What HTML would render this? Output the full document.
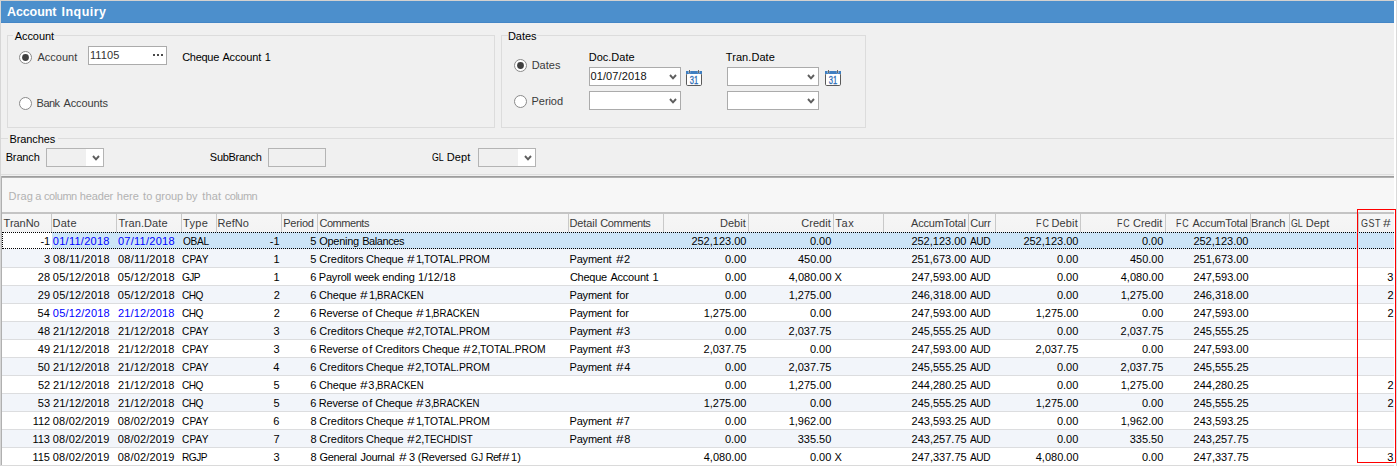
<!DOCTYPE html><html lang="en"><head><meta charset="utf-8"><title>Account Inquiry</title><style>
html,body{margin:0;padding:0}
body{width:1397px;height:466px;overflow:hidden;position:relative;background:#f0f0f0;
 font-family:'Liberation Sans',sans-serif;font-size:11px;color:#000}
div,span.t{position:absolute;box-sizing:border-box}
span.t{white-space:pre;line-height:14px;height:14px}
span.w{position:absolute;top:0;white-space:pre}
.h{color:#3a3a3a}
.b{color:#0000ff}
.g{color:#b2b2b2}
.lbl{color:#000}
.rl{color:#3a3a3a}
svg{position:absolute;overflow:visible}
</style></head><body>
<div style="left:0px;top:0px;width:1397px;height:1px;background:#d3d1cf"></div>
<div style="left:0px;top:1px;width:1px;height:465px;background:#d6d6d6"></div>
<div style="left:1394px;top:1px;width:2px;height:465px;background:#fff"></div>
<div style="left:1396px;top:0px;width:1px;height:466px;background:#dadada"></div>
<div style="left:1px;top:1px;width:1393px;height:22px;background:#4c8fcc;border-bottom:1px solid #4486c6"></div>
<span class="t" style="left:0;top:5px;color:#fff;font-size:12.5px;font-weight:bold;"><span class="w" style="left:6.98px;letter-spacing:-0.101px;">Account </span><span class="w" style="left:61.61px;letter-spacing:0.441px;">Inquiry</span></span>
<div style="left:7px;top:35px;width:488px;height:93px;border:1px solid #dcdcdc;"></div>
<div style="left:501px;top:35px;width:365px;height:93px;border:1px solid #dcdcdc;"></div>
<div style="left:13px;top:30px;width:41px;height:12px;background:#f0f0f0"></div>
<span class="t lbl" style="left:14.64px;top:29px;letter-spacing:-0.032px;">Account</span>
<div style="left:508px;top:30px;width:29px;height:12px;background:#f0f0f0"></div>
<span class="t lbl" style="left:507.98px;top:29px;letter-spacing:-0.042px;">Dates</span>
<svg style="left:19.0px;top:51.0px" width="13" height="13" viewBox="0 0 13 13"><circle cx="6.5" cy="6.5" r="6" fill="#fff" stroke="#8a8a8a" stroke-width="1"/><circle cx="6.5" cy="6.5" r="3.4" fill="#404040"/></svg>
<span class="t rl" style="left:37.40px;top:50px;letter-spacing:0.009px;">Account</span>
<div style="left:88px;top:46px;width:79px;height:19px;background:#fff;border:1px solid #ababab"></div>
<span class="t" style="left:89.95px;top:48px;color:#333;letter-spacing:0.130px;">11105</span>
<div style="left:153px;top:54px;width:2px;height:2px;background:#4a4a4a"></div>
<div style="left:157px;top:54px;width:2px;height:2px;background:#4a4a4a"></div>
<div style="left:161px;top:54px;width:2px;height:2px;background:#4a4a4a"></div>
<span class="t lbl" style="left:0;top:50px;"><span class="w" style="left:182.14px;letter-spacing:-0.274px;">Cheque </span><span class="w" style="left:222.41px;letter-spacing:-0.159px;">Account </span><span class="w" style="left:264.75px;">1</span></span>
<svg style="left:19.0px;top:97.0px" width="13" height="13" viewBox="0 0 13 13"><circle cx="6.5" cy="6.5" r="6" fill="#fff" stroke="#8a8a8a" stroke-width="1"/></svg>
<span class="t rl" style="left:0;top:96px;"><span class="w" style="left:36.61px;letter-spacing:-0.530px;">Bank </span><span class="w" style="left:63.41px;letter-spacing:-0.102px;">Accounts</span></span>
<svg style="left:514.0px;top:59.0px" width="13" height="13" viewBox="0 0 13 13"><circle cx="6.5" cy="6.5" r="6" fill="#fff" stroke="#8a8a8a" stroke-width="1"/><circle cx="6.5" cy="6.5" r="3.4" fill="#404040"/></svg>
<span class="t rl" style="left:531.67px;top:58px;letter-spacing:0.003px;">Dates</span>
<svg style="left:514.0px;top:95.0px" width="13" height="13" viewBox="0 0 13 13"><circle cx="6.5" cy="6.5" r="6" fill="#fff" stroke="#8a8a8a" stroke-width="1"/></svg>
<span class="t rl" style="left:531.61px;top:94px;letter-spacing:-0.076px;">Period</span>
<span class="t lbl" style="left:588.72px;top:50px;letter-spacing:0.009px;">Doc.Date</span>
<span class="t lbl" style="left:725.86px;top:50px;letter-spacing:0.055px;">Tran.Date</span>
<div style="left:589px;top:67px;width:92px;height:19px;background:#fff;border:1px solid #ababab"></div>
<svg style="left:668.6px;top:73.5px" width="8" height="7" viewBox="0 0 8 7"><path d="M1 1 L4 4.4 L7 1" fill="none" stroke="#5e5e5e" stroke-width="1.9" stroke-linejoin="miter"/></svg>
<div style="left:589px;top:91px;width:92px;height:19px;background:#fff;border:1px solid #ababab"></div>
<svg style="left:668.6px;top:97.5px" width="8" height="7" viewBox="0 0 8 7"><path d="M1 1 L4 4.4 L7 1" fill="none" stroke="#5e5e5e" stroke-width="1.9" stroke-linejoin="miter"/></svg>
<div style="left:727px;top:67px;width:92px;height:19px;background:#fff;border:1px solid #ababab"></div>
<svg style="left:806.6px;top:73.5px" width="8" height="7" viewBox="0 0 8 7"><path d="M1 1 L4 4.4 L7 1" fill="none" stroke="#5e5e5e" stroke-width="1.9" stroke-linejoin="miter"/></svg>
<div style="left:727px;top:91px;width:92px;height:19px;background:#fff;border:1px solid #ababab"></div>
<svg style="left:806.6px;top:97.5px" width="8" height="7" viewBox="0 0 8 7"><path d="M1 1 L4 4.4 L7 1" fill="none" stroke="#5e5e5e" stroke-width="1.9" stroke-linejoin="miter"/></svg>
<span class="t" style="left:590.42px;top:69px;color:#111;letter-spacing:0.137px;">01/07/2018</span>
<svg style="left:686px;top:70px" width="16" height="16" viewBox="0 0 16 16">
<rect x="0.5" y="3.5" width="15" height="12" rx="1.2" fill="#fff" stroke="#5a5a5a"/>
<rect x="0" y="1" width="16" height="3" fill="#3f7fc1"/>
<rect x="2.6" y="0" width="1.6" height="3.2" fill="#f0f0f0"/><rect x="11.8" y="0" width="1.6" height="3.2" fill="#f0f0f0"/>
<rect x="3.1" y="0" width="0.9" height="3" fill="#5a5a5a"/><rect x="12.1" y="0" width="0.9" height="3" fill="#5a5a5a"/>
<text x="3.7" y="13.6" textLength="8.4" lengthAdjust="spacingAndGlyphs" font-family="'Liberation Sans',sans-serif" font-size="10" fill="#2a6cb6" stroke="#2a6cb6" stroke-width="0.3">31</text></svg>
<svg style="left:825px;top:70px" width="16" height="16" viewBox="0 0 16 16">
<rect x="0.5" y="3.5" width="15" height="12" rx="1.2" fill="#fff" stroke="#5a5a5a"/>
<rect x="0" y="1" width="16" height="3" fill="#3f7fc1"/>
<rect x="2.6" y="0" width="1.6" height="3.2" fill="#f0f0f0"/><rect x="11.8" y="0" width="1.6" height="3.2" fill="#f0f0f0"/>
<rect x="3.1" y="0" width="0.9" height="3" fill="#5a5a5a"/><rect x="12.1" y="0" width="0.9" height="3" fill="#5a5a5a"/>
<text x="3.7" y="13.6" textLength="8.4" lengthAdjust="spacingAndGlyphs" font-family="'Liberation Sans',sans-serif" font-size="10" fill="#2a6cb6" stroke="#2a6cb6" stroke-width="0.3">31</text></svg>
<div style="left:1px;top:138px;width:1393px;height:1px;background:#dcdcdc"></div>
<div style="left:8px;top:132px;width:50px;height:12px;background:#f0f0f0"></div>
<span class="t lbl" style="left:9.61px;top:132px;letter-spacing:-0.134px;">Branches</span>
<span class="t lbl" style="left:5.65px;top:150px;letter-spacing:-0.129px;">Branch</span>
<div style="left:46px;top:148px;width:58px;height:19px;background:#f0f0f0;border:1px solid #b4b4b4"></div>
<div style="left:86px;top:149px;width:17px;height:17px;background:#fff"></div>
<svg style="left:91.6px;top:154.5px" width="8" height="7" viewBox="0 0 8 7"><path d="M1 1 L4 4.4 L7 1" fill="none" stroke="#5e5e5e" stroke-width="1.9" stroke-linejoin="miter"/></svg>
<span class="t lbl" style="left:209.86px;top:150px;letter-spacing:-0.304px;">SubBranch</span>
<div style="left:268px;top:148px;width:58px;height:19px;background:#f0f0f0;border:1px solid #b4b4b4"></div>
<span class="t lbl" style="left:0;top:150px;"><span class="w" style="left:431.79px;letter-spacing:-0.176px;transform:scaleX(0.8);transform-origin:0 50%;">GL </span><span class="w" style="left:446.78px;letter-spacing:0.131px;">Dept</span></span>
<div style="left:478px;top:148px;width:58px;height:19px;background:#f0f0f0;border:1px solid #b4b4b4"></div>
<div style="left:518px;top:149px;width:17px;height:17px;background:#fff"></div>
<svg style="left:523.6px;top:154.5px" width="8" height="7" viewBox="0 0 8 7"><path d="M1 1 L4 4.4 L7 1" fill="none" stroke="#5e5e5e" stroke-width="1.9" stroke-linejoin="miter"/></svg>
<div style="left:1px;top:174px;width:1393px;height:1px;background:#dedede"></div>
<div style="left:1px;top:176px;width:1393px;height:1px;background:#9d9d9d"></div>
<div style="left:1px;top:177px;width:1393px;height:1px;background:#b0b0b0"></div>
<div style="left:1px;top:176px;width:1px;height:290px;background:#b0b0b0"></div>
<div style="left:2px;top:178px;width:1392px;height:34px;background:#f7f7f7"></div>
<span class="t g" style="left:0;top:189px;"><span class="w" style="left:8.56px;letter-spacing:0.188px;">Drag </span><span class="w" style="left:35.33px;letter-spacing:-0.150px;">a </span><span class="w" style="left:44.10px;letter-spacing:-0.474px;">column </span><span class="w" style="left:79.86px;letter-spacing:-0.176px;">header </span><span class="w" style="left:116.71px;letter-spacing:0.085px;">here </span><span class="w" style="left:142.91px;letter-spacing:0.269px;">to </span><span class="w" style="left:155.35px;letter-spacing:-0.113px;">group </span><span class="w" style="left:186.06px;letter-spacing:-0.145px;">by </span><span class="w" style="left:202.21px;letter-spacing:0.164px;">that </span><span class="w" style="left:224.84px;letter-spacing:-0.519px;">column</span></span>
<div style="left:2px;top:212px;width:1392px;height:2px;background:#c4c4c4"></div>
<div style="left:2px;top:214px;width:1392px;height:18px;background:linear-gradient(#f6f6f6,#f3f3f3)"></div>
<div style="left:51px;top:214px;width:1px;height:18px;background:#c9c9c9"></div>
<div style="left:116px;top:214px;width:1px;height:18px;background:#c9c9c9"></div>
<div style="left:181px;top:214px;width:1px;height:18px;background:#c9c9c9"></div>
<div style="left:216px;top:214px;width:1px;height:18px;background:#c9c9c9"></div>
<div style="left:281px;top:214px;width:1px;height:18px;background:#c9c9c9"></div>
<div style="left:317px;top:214px;width:1px;height:18px;background:#c9c9c9"></div>
<div style="left:568px;top:214px;width:1px;height:18px;background:#c9c9c9"></div>
<div style="left:663px;top:214px;width:1px;height:18px;background:#c9c9c9"></div>
<div style="left:748px;top:214px;width:1px;height:18px;background:#c9c9c9"></div>
<div style="left:833px;top:214px;width:1px;height:18px;background:#c9c9c9"></div>
<div style="left:883px;top:214px;width:1px;height:18px;background:#c9c9c9"></div>
<div style="left:968px;top:214px;width:1px;height:18px;background:#c9c9c9"></div>
<div style="left:995px;top:214px;width:1px;height:18px;background:#c9c9c9"></div>
<div style="left:1080px;top:214px;width:1px;height:18px;background:#c9c9c9"></div>
<div style="left:1165px;top:214px;width:1px;height:18px;background:#c9c9c9"></div>
<div style="left:1250px;top:214px;width:1px;height:18px;background:#c9c9c9"></div>
<div style="left:1289px;top:214px;width:1px;height:18px;background:#c9c9c9"></div>
<div style="left:1358px;top:214px;width:1px;height:18px;background:#c9c9c9"></div>
<span class="t h" style="left:3.61px;top:216px;letter-spacing:-0.043px;">TranNo</span>
<span class="t h" style="left:52.55px;top:216px;letter-spacing:0.256px;">Date</span>
<span class="t h" style="left:118.41px;top:216px;letter-spacing:0.082px;">Tran.Date</span>
<span class="t h" style="left:183.03px;top:216px;letter-spacing:0.341px;">Type</span>
<span class="t h" style="left:217.61px;top:216px;letter-spacing:-0.009px;">RefNo</span>
<span class="t h" style="left:283.16px;top:216px;letter-spacing:-0.207px;">Period</span>
<span class="t h" style="left:319.41px;top:216px;letter-spacing:-0.451px;">Comments</span>
<span class="t h" style="left:0;top:216px;"><span class="w" style="left:569.53px;letter-spacing:-0.110px;">Detail </span><span class="w" style="left:600.29px;letter-spacing:-0.373px;">Comments</span></span>
<span class="t h" style="left:719.98px;top:216px;letter-spacing:0.034px;">Debit</span>
<span class="t h" style="left:801.37px;top:216px;letter-spacing:0.009px;">Credit</span>
<span class="t h" style="left:835.31px;top:216px;letter-spacing:0.632px;">Tax</span>
<span class="t h" style="left:911.12px;top:216px;letter-spacing:-0.227px;">AccumTotal</span>
<span class="t h" style="left:970.25px;top:216px;letter-spacing:-0.262px;">Curr</span>
<span class="t h" style="left:0;top:216px;"><span class="w" style="left:1035.83px;letter-spacing:1.311px;transform:scaleX(0.808);transform-origin:0 50%;">FC </span><span class="w" style="left:1051.55px;letter-spacing:0.115px;">Debit</span></span>
<span class="t h" style="left:0;top:216px;"><span class="w" style="left:1116.89px;letter-spacing:1.158px;transform:scaleX(0.802);transform-origin:0 50%;">FC </span><span class="w" style="left:1133.12px;letter-spacing:-0.046px;">Credit</span></span>
<span class="t h" style="left:0;top:216px;"><span class="w" style="left:1175.91px;letter-spacing:1.158px;transform:scaleX(0.802);transform-origin:0 50%;">FC </span><span class="w" style="left:1192.60px;letter-spacing:-0.181px;">AccumTotal</span></span>
<span class="t h" style="left:1251.12px;top:216px;letter-spacing:-0.104px;">Branch</span>
<span class="t h" style="left:0;top:216px;"><span class="w" style="left:1290.77px;letter-spacing:-0.176px;transform:scaleX(0.8);transform-origin:0 50%;">GL </span><span class="w" style="left:1305.70px;letter-spacing:0.157px;">Dept</span></span>
<span class="t h" style="left:0;top:216px;"><span class="w" style="left:1360.65px;letter-spacing:0.556px;transform:scaleX(0.817);transform-origin:0 50%;">GST </span><span class="w" style="left:1383.19px;letter-spacing:-0.150px;transform:scaleX(1.25);transform-origin:0 50%;">#</span></span>
<div style="left:2px;top:232px;width:1392px;height:17px;background:#fff"></div>
<div style="left:2px;top:249px;width:1392px;height:1px;background:#f0f3f9"></div>
<div style="left:52px;top:232px;width:1342px;height:17px;background:#cce4f7"></div>
<div style="left:2px;top:232px;width:1392px;height:17px;border:1px dotted #000;border-right:none"></div>
<span class="t" style="left:40.40px;top:234px;">-1</span>
<span class="t b" style="left:52.83px;top:234px;letter-spacing:0.256px;">01/11/2018</span>
<span class="t b" style="left:117.91px;top:234px;letter-spacing:0.276px;">07/11/2018</span>
<span class="t" style="left:182.76px;top:234px;letter-spacing:-0.291px;transform:scaleX(0.92);transform-origin:0 50%;">OBAL</span>
<span class="t" style="left:269.83px;top:234px;">-1</span>
<span class="t" style="left:310.16px;top:234px;">5</span>
<span class="t" style="left:0;top:234px;"><span class="w" style="left:319.14px;letter-spacing:-0.252px;">Opening </span><span class="w" style="left:362.16px;letter-spacing:-0.409px;">Balances</span></span>
<span class="t" style="left:691.39px;top:234px;">252,123.00</span>
<span class="t" style="left:809.91px;top:234px;">0.00</span>
<span class="t" style="left:911.39px;top:234px;">252,123.00</span>
<span class="t" style="left:970.36px;top:234px;letter-spacing:-0.418px;transform:scaleX(0.92);transform-origin:0 50%;">AUD</span>
<span class="t" style="left:1023.39px;top:234px;">252,123.00</span>
<span class="t" style="left:1141.91px;top:234px;">0.00</span>
<span class="t" style="left:1193.39px;top:234px;">252,123.00</span>
<div style="left:2px;top:250px;width:1392px;height:18px;background:#f2f5fa;border-bottom:1px solid #dcdddf"></div>
<span class="t" style="left:43.92px;top:252px;">3</span>
<span class="t" style="left:52.91px;top:252px;letter-spacing:0.276px;">08/11/2018</span>
<span class="t" style="left:117.91px;top:252px;letter-spacing:0.276px;">08/11/2018</span>
<span class="t" style="left:182.48px;top:252px;letter-spacing:0.119px;transform:scaleX(0.92);transform-origin:0 50%;">CPAY</span>
<span class="t" style="left:273.50px;top:252px;">1</span>
<span class="t" style="left:310.16px;top:252px;">5</span>
<span class="t" style="left:0;top:252px;"><span class="w" style="left:319.35px;letter-spacing:-0.052px;">Creditors </span><span class="w" style="left:366.12px;letter-spacing:-0.205px;">Cheque </span><span class="w" style="left:407.19px;letter-spacing:-0.150px;transform:scaleX(1.25);transform-origin:0 50%;">#</span><span class="w" style="left:416.06px;letter-spacing:-0.831px;">1,</span><span class="w" style="left:424.33px;letter-spacing:-0.056px;transform:scaleX(0.94);transform-origin:0 50%;">TOTAL.PROM</span></span>
<span class="t" style="left:0;top:252px;"><span class="w" style="left:569.61px;letter-spacing:-0.225px;">Payment </span><span class="w" style="left:616.11px;letter-spacing:-0.150px;transform:scaleX(1.25);transform-origin:0 50%;">#</span><span class="w" style="left:624.08px;">2</span></span>
<span class="t" style="left:724.91px;top:252px;">0.00</span>
<span class="t" style="left:797.93px;top:252px;">450.00</span>
<span class="t" style="left:911.42px;top:252px;">251,673.00</span>
<span class="t" style="left:970.36px;top:252px;letter-spacing:-0.418px;transform:scaleX(0.92);transform-origin:0 50%;">AUD</span>
<span class="t" style="left:1056.91px;top:252px;">0.00</span>
<span class="t" style="left:1129.93px;top:252px;">450.00</span>
<span class="t" style="left:1193.42px;top:252px;">251,673.00</span>
<div style="left:2px;top:268px;width:1392px;height:18px;background:#ffffff;border-bottom:1px solid #dcdddf"></div>
<span class="t" style="left:37.78px;top:270px;">28</span>
<span class="t" style="left:52.87px;top:270px;letter-spacing:0.190px;">05/12/2018</span>
<span class="t" style="left:117.87px;top:270px;letter-spacing:0.190px;">05/12/2018</span>
<span class="t" style="left:182.48px;top:270px;letter-spacing:-0.686px;transform:scaleX(0.92);transform-origin:0 50%;">GJP</span>
<span class="t" style="left:273.50px;top:270px;">1</span>
<span class="t" style="left:310.22px;top:270px;">6</span>
<span class="t" style="left:0;top:270px;"><span class="w" style="left:318.73px;letter-spacing:-0.174px;">Payroll </span><span class="w" style="left:354.58px;letter-spacing:-0.276px;">week </span><span class="w" style="left:382.27px;letter-spacing:-0.095px;">ending </span><span class="w" style="left:418.03px;letter-spacing:0.135px;">1/12/18</span></span>
<span class="t" style="left:0;top:270px;"><span class="w" style="left:569.89px;letter-spacing:-0.244px;">Cheque </span><span class="w" style="left:610.38px;letter-spacing:-0.204px;">Account </span><span class="w" style="left:652.56px;">1</span></span>
<span class="t" style="left:724.91px;top:270px;">0.00</span>
<span class="t" style="left:788.75px;top:270px;">4,080.00</span>
<span class="t" style="left:834.58px;top:270px;letter-spacing:-0.150px;">X</span>
<span class="t" style="left:911.52px;top:270px;">247,593.00</span>
<span class="t" style="left:970.36px;top:270px;letter-spacing:-0.418px;transform:scaleX(0.92);transform-origin:0 50%;">AUD</span>
<span class="t" style="left:1056.91px;top:270px;">0.00</span>
<span class="t" style="left:1120.75px;top:270px;">4,080.00</span>
<span class="t" style="left:1193.52px;top:270px;">247,593.00</span>
<span class="t" style="left:1387.16px;top:270px;">3</span>
<div style="left:2px;top:286px;width:1392px;height:18px;background:#f2f5fa;border-bottom:1px solid #dcdddf"></div>
<span class="t" style="left:37.79px;top:288px;">29</span>
<span class="t" style="left:52.87px;top:288px;letter-spacing:0.190px;">05/12/2018</span>
<span class="t" style="left:117.87px;top:288px;letter-spacing:0.190px;">05/12/2018</span>
<span class="t" style="left:182.48px;top:288px;letter-spacing:-0.633px;transform:scaleX(0.92);transform-origin:0 50%;">CHQ</span>
<span class="t" style="left:273.63px;top:288px;">2</span>
<span class="t" style="left:310.22px;top:288px;">6</span>
<span class="t" style="left:0;top:288px;"><span class="w" style="left:319.12px;letter-spacing:-0.205px;">Cheque </span><span class="w" style="left:360.23px;letter-spacing:-0.150px;transform:scaleX(1.25);transform-origin:0 50%;">#</span><span class="w" style="left:368.93px;letter-spacing:-0.436px;">1,</span><span class="w" style="left:377.38px;letter-spacing:0.058px;transform:scaleX(0.873);transform-origin:0 50%;">BRACKEN</span></span>
<span class="t" style="left:0;top:288px;"><span class="w" style="left:569.61px;letter-spacing:-0.225px;">Payment </span><span class="w" style="left:616.20px;letter-spacing:-0.083px;">for</span></span>
<span class="t" style="left:724.91px;top:288px;">0.00</span>
<span class="t" style="left:788.64px;top:288px;">1,275.00</span>
<span class="t" style="left:911.52px;top:288px;">246,318.00</span>
<span class="t" style="left:970.36px;top:288px;letter-spacing:-0.418px;transform:scaleX(0.92);transform-origin:0 50%;">AUD</span>
<span class="t" style="left:1056.91px;top:288px;">0.00</span>
<span class="t" style="left:1120.64px;top:288px;">1,275.00</span>
<span class="t" style="left:1193.52px;top:288px;">246,318.00</span>
<span class="t" style="left:1387.47px;top:288px;">2</span>
<div style="left:2px;top:304px;width:1392px;height:18px;background:#ffffff;border-bottom:1px solid #dcdddf"></div>
<span class="t" style="left:37.61px;top:306px;">54</span>
<span class="t b" style="left:52.87px;top:306px;letter-spacing:0.190px;">05/12/2018</span>
<span class="t b" style="left:117.93px;top:306px;letter-spacing:0.153px;">21/12/2018</span>
<span class="t" style="left:182.48px;top:306px;letter-spacing:-0.633px;transform:scaleX(0.92);transform-origin:0 50%;">CHQ</span>
<span class="t" style="left:273.63px;top:306px;">2</span>
<span class="t" style="left:310.22px;top:306px;">6</span>
<span class="t" style="left:0;top:306px;"><span class="w" style="left:318.73px;letter-spacing:-0.165px;">Reverse </span><span class="w" style="left:362.12px;letter-spacing:0.915px;">of </span><span class="w" style="left:375.30px;letter-spacing:-0.249px;">Cheque </span><span class="w" style="left:416.25px;letter-spacing:-0.150px;transform:scaleX(1.25);transform-origin:0 50%;">#</span><span class="w" style="left:425.09px;letter-spacing:-0.370px;">1,</span><span class="w" style="left:433.40px;letter-spacing:0.043px;transform:scaleX(0.871);transform-origin:0 50%;">BRACKEN</span></span>
<span class="t" style="left:0;top:306px;"><span class="w" style="left:569.61px;letter-spacing:-0.225px;">Payment </span><span class="w" style="left:616.20px;letter-spacing:-0.083px;">for</span></span>
<span class="t" style="left:703.64px;top:306px;">1,275.00</span>
<span class="t" style="left:809.91px;top:306px;">0.00</span>
<span class="t" style="left:911.52px;top:306px;">247,593.00</span>
<span class="t" style="left:970.36px;top:306px;letter-spacing:-0.418px;transform:scaleX(0.92);transform-origin:0 50%;">AUD</span>
<span class="t" style="left:1035.64px;top:306px;">1,275.00</span>
<span class="t" style="left:1141.91px;top:306px;">0.00</span>
<span class="t" style="left:1193.52px;top:306px;">247,593.00</span>
<span class="t" style="left:1387.47px;top:306px;">2</span>
<div style="left:2px;top:322px;width:1392px;height:18px;background:#f2f5fa;border-bottom:1px solid #dcdddf"></div>
<span class="t" style="left:37.83px;top:324px;">48</span>
<span class="t" style="left:52.93px;top:324px;letter-spacing:0.153px;">21/12/2018</span>
<span class="t" style="left:117.93px;top:324px;letter-spacing:0.153px;">21/12/2018</span>
<span class="t" style="left:182.48px;top:324px;letter-spacing:0.119px;transform:scaleX(0.92);transform-origin:0 50%;">CPAY</span>
<span class="t" style="left:273.61px;top:324px;">3</span>
<span class="t" style="left:310.22px;top:324px;">6</span>
<span class="t" style="left:0;top:324px;"><span class="w" style="left:319.35px;letter-spacing:-0.052px;">Creditors </span><span class="w" style="left:366.12px;letter-spacing:-0.205px;">Cheque </span><span class="w" style="left:407.19px;letter-spacing:-0.150px;transform:scaleX(1.25);transform-origin:0 50%;">#</span><span class="w" style="left:415.23px;letter-spacing:0.028px;">2,</span><span class="w" style="left:424.33px;letter-spacing:-0.056px;transform:scaleX(0.94);transform-origin:0 50%;">TOTAL.PROM</span></span>
<span class="t" style="left:0;top:324px;"><span class="w" style="left:569.61px;letter-spacing:-0.225px;">Payment </span><span class="w" style="left:616.11px;letter-spacing:-0.150px;transform:scaleX(1.25);transform-origin:0 50%;">#</span><span class="w" style="left:623.94px;">3</span></span>
<span class="t" style="left:724.91px;top:324px;">0.00</span>
<span class="t" style="left:788.55px;top:324px;">2,037.75</span>
<span class="t" style="left:911.58px;top:324px;">245,555.25</span>
<span class="t" style="left:970.36px;top:324px;letter-spacing:-0.418px;transform:scaleX(0.92);transform-origin:0 50%;">AUD</span>
<span class="t" style="left:1056.91px;top:324px;">0.00</span>
<span class="t" style="left:1120.55px;top:324px;">2,037.75</span>
<span class="t" style="left:1193.58px;top:324px;">245,555.25</span>
<div style="left:2px;top:340px;width:1392px;height:18px;background:#ffffff;border-bottom:1px solid #dcdddf"></div>
<span class="t" style="left:37.77px;top:342px;">49</span>
<span class="t" style="left:52.93px;top:342px;letter-spacing:0.153px;">21/12/2018</span>
<span class="t" style="left:117.93px;top:342px;letter-spacing:0.153px;">21/12/2018</span>
<span class="t" style="left:182.48px;top:342px;letter-spacing:0.119px;transform:scaleX(0.92);transform-origin:0 50%;">CPAY</span>
<span class="t" style="left:273.61px;top:342px;">3</span>
<span class="t" style="left:310.22px;top:342px;">6</span>
<span class="t" style="left:0;top:342px;"><span class="w" style="left:318.73px;letter-spacing:-0.165px;">Reverse </span><span class="w" style="left:362.12px;letter-spacing:0.915px;">of </span><span class="w" style="left:375.22px;letter-spacing:-0.041px;">Creditors </span><span class="w" style="left:422.30px;letter-spacing:-0.249px;">Cheque </span><span class="w" style="left:463.21px;letter-spacing:-0.150px;transform:scaleX(1.25);transform-origin:0 50%;">#</span><span class="w" style="left:471.51px;letter-spacing:-0.228px;">2,</span><span class="w" style="left:480.35px;letter-spacing:-0.066px;transform:scaleX(0.937);transform-origin:0 50%;">TOTAL.PROM</span></span>
<span class="t" style="left:0;top:342px;"><span class="w" style="left:569.61px;letter-spacing:-0.225px;">Payment </span><span class="w" style="left:616.11px;letter-spacing:-0.150px;transform:scaleX(1.25);transform-origin:0 50%;">#</span><span class="w" style="left:623.94px;">3</span></span>
<span class="t" style="left:703.55px;top:342px;">2,037.75</span>
<span class="t" style="left:809.91px;top:342px;">0.00</span>
<span class="t" style="left:911.52px;top:342px;">247,593.00</span>
<span class="t" style="left:970.36px;top:342px;letter-spacing:-0.418px;transform:scaleX(0.92);transform-origin:0 50%;">AUD</span>
<span class="t" style="left:1035.55px;top:342px;">2,037.75</span>
<span class="t" style="left:1141.91px;top:342px;">0.00</span>
<span class="t" style="left:1193.52px;top:342px;">247,593.00</span>
<div style="left:2px;top:358px;width:1392px;height:18px;background:#f2f5fa;border-bottom:1px solid #dcdddf"></div>
<span class="t" style="left:37.73px;top:360px;">50</span>
<span class="t" style="left:52.93px;top:360px;letter-spacing:0.153px;">21/12/2018</span>
<span class="t" style="left:117.93px;top:360px;letter-spacing:0.153px;">21/12/2018</span>
<span class="t" style="left:182.48px;top:360px;letter-spacing:0.119px;transform:scaleX(0.92);transform-origin:0 50%;">CPAY</span>
<span class="t" style="left:273.22px;top:360px;">4</span>
<span class="t" style="left:310.22px;top:360px;">6</span>
<span class="t" style="left:0;top:360px;"><span class="w" style="left:319.35px;letter-spacing:-0.052px;">Creditors </span><span class="w" style="left:366.12px;letter-spacing:-0.205px;">Cheque </span><span class="w" style="left:407.19px;letter-spacing:-0.150px;transform:scaleX(1.25);transform-origin:0 50%;">#</span><span class="w" style="left:415.23px;letter-spacing:0.028px;">2,</span><span class="w" style="left:424.33px;letter-spacing:-0.056px;transform:scaleX(0.94);transform-origin:0 50%;">TOTAL.PROM</span></span>
<span class="t" style="left:0;top:360px;"><span class="w" style="left:569.61px;letter-spacing:-0.225px;">Payment </span><span class="w" style="left:616.11px;letter-spacing:-0.150px;transform:scaleX(1.25);transform-origin:0 50%;">#</span><span class="w" style="left:624.32px;">4</span></span>
<span class="t" style="left:724.91px;top:360px;">0.00</span>
<span class="t" style="left:788.55px;top:360px;">2,037.75</span>
<span class="t" style="left:911.58px;top:360px;">245,555.25</span>
<span class="t" style="left:970.36px;top:360px;letter-spacing:-0.418px;transform:scaleX(0.92);transform-origin:0 50%;">AUD</span>
<span class="t" style="left:1056.91px;top:360px;">0.00</span>
<span class="t" style="left:1120.55px;top:360px;">2,037.75</span>
<span class="t" style="left:1193.58px;top:360px;">245,555.25</span>
<div style="left:2px;top:376px;width:1392px;height:18px;background:#ffffff;border-bottom:1px solid #dcdddf"></div>
<span class="t" style="left:37.98px;top:378px;">52</span>
<span class="t" style="left:52.93px;top:378px;letter-spacing:0.153px;">21/12/2018</span>
<span class="t" style="left:117.93px;top:378px;letter-spacing:0.153px;">21/12/2018</span>
<span class="t" style="left:182.48px;top:378px;letter-spacing:-0.633px;transform:scaleX(0.92);transform-origin:0 50%;">CHQ</span>
<span class="t" style="left:273.45px;top:378px;">5</span>
<span class="t" style="left:310.22px;top:378px;">6</span>
<span class="t" style="left:0;top:378px;"><span class="w" style="left:319.12px;letter-spacing:-0.205px;">Cheque </span><span class="w" style="left:360.23px;letter-spacing:-0.150px;transform:scaleX(1.25);transform-origin:0 50%;">#</span><span class="w" style="left:368.22px;letter-spacing:0.347px;">3,</span><span class="w" style="left:377.38px;letter-spacing:0.058px;transform:scaleX(0.873);transform-origin:0 50%;">BRACKEN</span></span>
<span class="t" style="left:724.91px;top:378px;">0.00</span>
<span class="t" style="left:788.64px;top:378px;">1,275.00</span>
<span class="t" style="left:911.58px;top:378px;">244,280.25</span>
<span class="t" style="left:970.36px;top:378px;letter-spacing:-0.418px;transform:scaleX(0.92);transform-origin:0 50%;">AUD</span>
<span class="t" style="left:1056.91px;top:378px;">0.00</span>
<span class="t" style="left:1120.64px;top:378px;">1,275.00</span>
<span class="t" style="left:1193.58px;top:378px;">244,280.25</span>
<span class="t" style="left:1387.47px;top:378px;">2</span>
<div style="left:2px;top:394px;width:1392px;height:18px;background:#f2f5fa;border-bottom:1px solid #dcdddf"></div>
<span class="t" style="left:37.80px;top:396px;">53</span>
<span class="t" style="left:52.93px;top:396px;letter-spacing:0.153px;">21/12/2018</span>
<span class="t" style="left:117.93px;top:396px;letter-spacing:0.153px;">21/12/2018</span>
<span class="t" style="left:182.48px;top:396px;letter-spacing:-0.633px;transform:scaleX(0.92);transform-origin:0 50%;">CHQ</span>
<span class="t" style="left:273.45px;top:396px;">5</span>
<span class="t" style="left:310.22px;top:396px;">6</span>
<span class="t" style="left:0;top:396px;"><span class="w" style="left:318.73px;letter-spacing:-0.165px;">Reverse </span><span class="w" style="left:362.12px;letter-spacing:0.915px;">of </span><span class="w" style="left:375.30px;letter-spacing:-0.249px;">Cheque </span><span class="w" style="left:416.25px;letter-spacing:-0.150px;transform:scaleX(1.25);transform-origin:0 50%;">#</span><span class="w" style="left:424.63px;letter-spacing:-0.012px;">3,</span><span class="w" style="left:433.40px;letter-spacing:0.043px;transform:scaleX(0.871);transform-origin:0 50%;">BRACKEN</span></span>
<span class="t" style="left:703.64px;top:396px;">1,275.00</span>
<span class="t" style="left:809.91px;top:396px;">0.00</span>
<span class="t" style="left:911.58px;top:396px;">245,555.25</span>
<span class="t" style="left:970.36px;top:396px;letter-spacing:-0.418px;transform:scaleX(0.92);transform-origin:0 50%;">AUD</span>
<span class="t" style="left:1035.64px;top:396px;">1,275.00</span>
<span class="t" style="left:1141.91px;top:396px;">0.00</span>
<span class="t" style="left:1193.58px;top:396px;">245,555.25</span>
<span class="t" style="left:1387.47px;top:396px;">2</span>
<div style="left:2px;top:412px;width:1392px;height:18px;background:#ffffff;border-bottom:1px solid #dcdddf"></div>
<span class="t" style="left:32.67px;top:414px;">112</span>
<span class="t" style="left:52.84px;top:414px;letter-spacing:0.178px;">08/02/2019</span>
<span class="t" style="left:117.84px;top:414px;letter-spacing:0.178px;">08/02/2019</span>
<span class="t" style="left:182.48px;top:414px;letter-spacing:0.119px;transform:scaleX(0.92);transform-origin:0 50%;">CPAY</span>
<span class="t" style="left:273.28px;top:414px;">6</span>
<span class="t" style="left:310.38px;top:414px;">8</span>
<span class="t" style="left:0;top:414px;"><span class="w" style="left:319.35px;letter-spacing:-0.052px;">Creditors </span><span class="w" style="left:366.12px;letter-spacing:-0.205px;">Cheque </span><span class="w" style="left:407.19px;letter-spacing:-0.150px;transform:scaleX(1.25);transform-origin:0 50%;">#</span><span class="w" style="left:416.06px;letter-spacing:-0.831px;">1,</span><span class="w" style="left:424.33px;letter-spacing:-0.056px;transform:scaleX(0.94);transform-origin:0 50%;">TOTAL.PROM</span></span>
<span class="t" style="left:0;top:414px;"><span class="w" style="left:569.61px;letter-spacing:-0.225px;">Payment </span><span class="w" style="left:616.11px;letter-spacing:-0.150px;transform:scaleX(1.25);transform-origin:0 50%;">#</span><span class="w" style="left:623.83px;">7</span></span>
<span class="t" style="left:724.91px;top:414px;">0.00</span>
<span class="t" style="left:788.63px;top:414px;">1,962.00</span>
<span class="t" style="left:911.58px;top:414px;">243,593.25</span>
<span class="t" style="left:970.36px;top:414px;letter-spacing:-0.418px;transform:scaleX(0.92);transform-origin:0 50%;">AUD</span>
<span class="t" style="left:1056.91px;top:414px;">0.00</span>
<span class="t" style="left:1120.63px;top:414px;">1,962.00</span>
<span class="t" style="left:1193.58px;top:414px;">243,593.25</span>
<div style="left:2px;top:430px;width:1392px;height:18px;background:#f2f5fa;border-bottom:1px solid #dcdddf"></div>
<span class="t" style="left:32.41px;top:432px;">113</span>
<span class="t" style="left:52.84px;top:432px;letter-spacing:0.178px;">08/02/2019</span>
<span class="t" style="left:117.84px;top:432px;letter-spacing:0.178px;">08/02/2019</span>
<span class="t" style="left:182.48px;top:432px;letter-spacing:0.119px;transform:scaleX(0.92);transform-origin:0 50%;">CPAY</span>
<span class="t" style="left:273.45px;top:432px;">7</span>
<span class="t" style="left:310.38px;top:432px;">8</span>
<span class="t" style="left:0;top:432px;"><span class="w" style="left:319.35px;letter-spacing:-0.052px;">Creditors </span><span class="w" style="left:366.12px;letter-spacing:-0.205px;">Cheque </span><span class="w" style="left:407.19px;letter-spacing:-0.150px;transform:scaleX(1.25);transform-origin:0 50%;">#</span><span class="w" style="left:415.23px;letter-spacing:0.028px;">2,</span><span class="w" style="left:424.39px;letter-spacing:-0.043px;transform:scaleX(0.89);transform-origin:0 50%;">TECHDIST</span></span>
<span class="t" style="left:0;top:432px;"><span class="w" style="left:569.61px;letter-spacing:-0.225px;">Payment </span><span class="w" style="left:616.11px;letter-spacing:-0.150px;transform:scaleX(1.25);transform-origin:0 50%;">#</span><span class="w" style="left:624.18px;">8</span></span>
<span class="t" style="left:724.91px;top:432px;">0.00</span>
<span class="t" style="left:797.70px;top:432px;">335.50</span>
<span class="t" style="left:911.58px;top:432px;">243,257.75</span>
<span class="t" style="left:970.36px;top:432px;letter-spacing:-0.418px;transform:scaleX(0.92);transform-origin:0 50%;">AUD</span>
<span class="t" style="left:1056.91px;top:432px;">0.00</span>
<span class="t" style="left:1129.70px;top:432px;">335.50</span>
<span class="t" style="left:1193.58px;top:432px;">243,257.75</span>
<div style="left:2px;top:448px;width:1392px;height:18px;background:#ffffff;border-bottom:1px solid #dcdddf"></div>
<span class="t" style="left:32.42px;top:450px;">115</span>
<span class="t" style="left:52.84px;top:450px;letter-spacing:0.178px;">08/02/2019</span>
<span class="t" style="left:117.84px;top:450px;letter-spacing:0.178px;">08/02/2019</span>
<span class="t" style="left:182.29px;top:450px;letter-spacing:-0.506px;transform:scaleX(0.92);transform-origin:0 50%;">RGJP</span>
<span class="t" style="left:273.61px;top:450px;">3</span>
<span class="t" style="left:310.38px;top:450px;">8</span>
<span class="t" style="left:0;top:450px;"><span class="w" style="left:319.40px;letter-spacing:-0.283px;">General </span><span class="w" style="left:360.55px;letter-spacing:-0.336px;">Journal </span><span class="w" style="left:399.09px;letter-spacing:-0.150px;transform:scaleX(1.25);transform-origin:0 50%;"># </span><span class="w" style="left:408.94px;">3 </span><span class="w" style="left:417.77px;letter-spacing:-0.249px;">(Reversed </span><span class="w" style="left:470.54px;letter-spacing:0.520px;transform:scaleX(0.834);transform-origin:0 50%;">GJ </span><span class="w" style="left:485.74px;letter-spacing:-0.757px;">Ref</span><span class="w" style="left:502.15px;letter-spacing:-0.150px;transform:scaleX(1.25);transform-origin:0 50%;">#</span><span class="w" style="left:510.93px;letter-spacing:0.300px;">1)</span></span>
<span class="t" style="left:703.75px;top:450px;">4,080.00</span>
<span class="t" style="left:809.91px;top:450px;">0.00</span>
<span class="t" style="left:834.58px;top:450px;letter-spacing:-0.150px;">X</span>
<span class="t" style="left:911.58px;top:450px;">247,337.75</span>
<span class="t" style="left:970.36px;top:450px;letter-spacing:-0.418px;transform:scaleX(0.92);transform-origin:0 50%;">AUD</span>
<span class="t" style="left:1035.75px;top:450px;">4,080.00</span>
<span class="t" style="left:1141.91px;top:450px;">0.00</span>
<span class="t" style="left:1193.58px;top:450px;">247,337.75</span>
<span class="t" style="left:1387.16px;top:450px;">3</span>
<div style="left:1px;top:465px;width:1393px;height:1px;background:#dadada"></div>
<div style="left:1357px;top:209px;width:39px;height:254px;border:1px solid #ff0000"></div>
</body></html>
